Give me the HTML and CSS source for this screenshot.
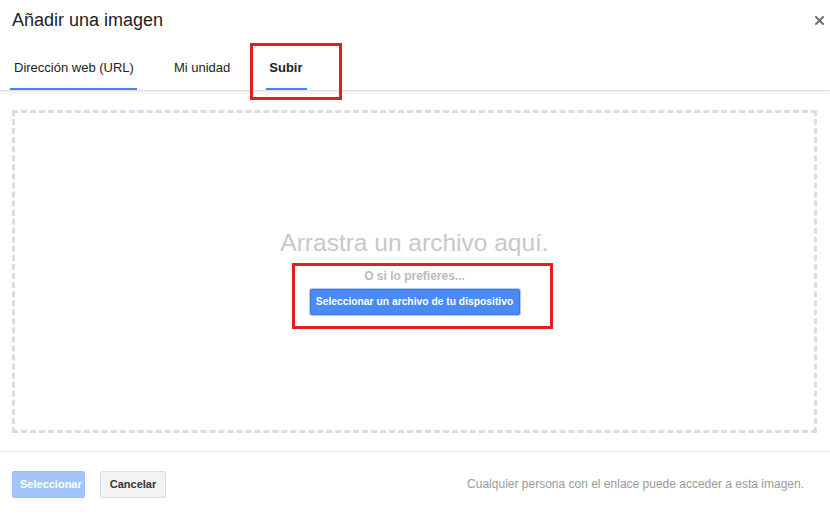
FILE: index.html
```html
<!DOCTYPE html>
<html lang="es">
<head>
<meta charset="utf-8">
<title>Añadir una imagen</title>
<link rel="stylesheet" href="styles.css">
</head>
<body>
<div class="dialog">
  <header class="dialog-header">
    <h1 class="dialog-title">Añadir una imagen</h1>
    <button class="close-btn" aria-label="Cerrar">
      <svg width="9" height="9" viewBox="0 0 9 9"><path d="M1 1L8 8M8 1L1 8" stroke="#666" stroke-width="1.8" stroke-linecap="square"/></svg>
    </button>
  </header>
  <nav class="tabs">
    <div class="tab tab-url">Dirección web (URL)</div>
    <div class="tab">Mi unidad</div>
    <div class="tab tab-active">Subir</div>
  </nav>
  <main class="content">
    <div class="dropzone">
      <div class="drop-title">Arrastra un archivo aquí.</div>
      <div class="drop-or">O si lo prefieres...</div>
      <button class="pick-btn">Seleccionar un archivo de tu dispositivo</button>
    </div>
  </main>
  <footer class="footer">
    <button class="btn btn-primary">Seleccionar</button>
    <button class="btn btn-default">Cancelar</button>
    <span class="footer-note">Cualquier persona con el enlace puede acceder a esta imagen.</span>
  </footer>
  <div class="annot annot-tab"></div>
  <div class="annot annot-pick"></div>
</div>
</body>
</html>
```

FILE: styles.css
```css
* { box-sizing: border-box; }
html, body { margin: 0; padding: 0; background: #fff; }
body {
  font-family: "Liberation Sans", Arial, sans-serif;
  width: 830px;
  height: 514px;
  overflow: hidden;
}
.dialog { position: relative; width: 830px; height: 514px; }

.dialog-header {
  height: 40px;
  display: flex;
  align-items: center;
  justify-content: space-between;
  padding: 0 4px 0 12px;
}
.dialog-title {
  margin: 0;
  font-size: 18px;
  font-weight: normal;
  color: #222;
  padding-top: 1px;
}
.close-btn {
  border: 0;
  background: transparent;
  padding: 0;
  width: 10px;
  height: 10px;
  display: flex;
  align-items: center;
  justify-content: center;
  margin-right: 2px;
}

.tabs {
  margin-top: 5px;
  height: 46px;
  display: flex;
  gap: 33px;
  padding-left: 10px;
  border-bottom: 1px solid #e2e2e2;
  box-shadow: 0 2px 3px rgba(0,0,0,0.07);
}
.tab {
  font-size: 13px;
  color: #222;
  padding: 15px 3px 0 4px;
  border-bottom: 2px solid transparent;
}
.tab-url { border-bottom-color: #4285f4; }
.tab-active {
  font-weight: bold;
  border-bottom-color: #4285f4;
  padding: 15px 4px 0 3px;
}

.content { padding: 19px 13px 18px 12px; }
.dropzone {
  height: 323px;
  border: 3px dashed #dcdcdc;
  display: flex;
  flex-direction: column;
  align-items: center;
  justify-content: center;
}
.drop-title {
  font-size: 24.5px;
  color: #c8c8c8;
}
.drop-or {
  font-size: 12px;
  font-weight: bold;
  color: #bbb;
  margin-top: 12px;
}
.pick-btn {
  margin-top: 6px;
  height: 26px;
  width: 210px;
  font-family: "Liberation Sans", Arial, sans-serif;
  font-size: 10.3px;
  font-weight: bold;
  white-space: nowrap;
  color: #fff;
  background: #4a8af4;
  border: 1px solid #3b78e7;
  box-shadow: 0 0 0 1px #b3cdf8;
  border-radius: 2px;
  padding: 0;
}

.footer {
  border-top: 1px solid #e8e8e8;
  height: 62px;
  display: flex;
  align-items: center;
  padding: 3px 26px 0 12px;
}
.btn {
  height: 27px;
  font-family: "Liberation Sans", Arial, sans-serif;
  font-size: 11px;
  font-weight: bold;
  border-radius: 2px;
  padding: 0 7px;
  white-space: nowrap;
}
.btn-primary {
  width: 73px;
  background: #a3c5fb;
  border: 1px solid #9bbcf4;
  color: #fff;
}
.btn-default {
  width: 66px;
  margin-left: 15px;
  background: #f3f3f3;
  border: 1px solid #dcdcdc;
  color: #333;
}
.footer-note {
  margin-left: auto;
  font-size: 12px;
  color: #9a9a9a;
}

.annot {
  position: absolute;
  border: 3px solid #e3201f;
  pointer-events: none;
}
.annot-tab { left: 250px; top: 43px; width: 92px; height: 57px; }
.annot-pick { left: 292px; top: 263px; width: 261px; height: 66px; }
```
